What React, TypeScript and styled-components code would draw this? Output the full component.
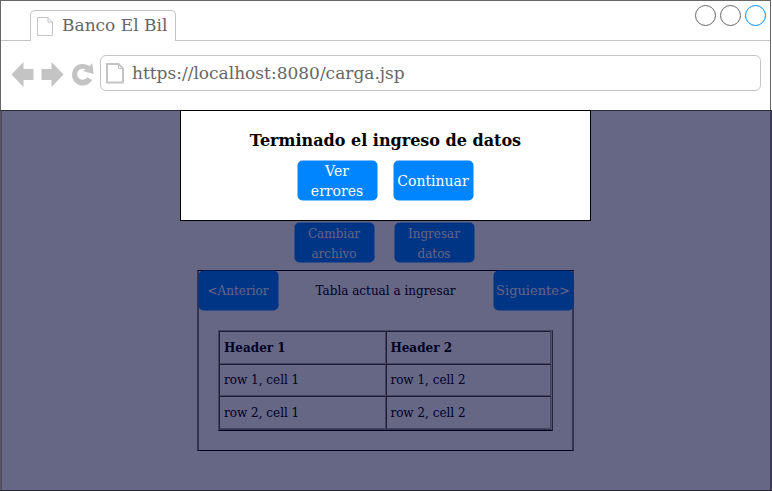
import React from "react";
import styled, { createGlobalStyle } from "styled-components";

const Global = createGlobalStyle`
  * { box-sizing: border-box; }
  html, body { margin: 0; overflow: hidden; }
  body { width: 772px; height: 491px; background: #fff; font-family: "DejaVu Serif", serif; }
`;

const Window = styled.div`
  display: flex;
  flex-direction: column;
  width: 772px;
  height: 491px;
`;

const Chrome = styled.header`
  width: 771px;
  height: 110px;
  border: 1px solid #666;
  border-bottom: 0;
`;

const TabBar = styled.div`
  display: flex;
  justify-content: space-between;
  align-items: flex-start;
  height: 40px;
  padding: 4px 3px 0 29px;
  border-bottom: 1px solid #c4c4c4;
`;

const Tab = styled.div`
  display: flex;
  width: 146px;
  height: 31px;
  margin-top: 5px;
  padding: 6px 0 0 6px;
  border: 1px solid #c4c4c4;
  border-bottom: 0;
  border-radius: 5px 5px 0 0;
  background: #fff;
  color: #666;
  font-size: 17px;
  line-height: 16px;
  white-space: nowrap;
`;

const TabTitle = styled.span`
  margin-left: 8px;
`;

const Controls = styled.div`
  display: flex;
  gap: 3px;
`;

const AddressBar = styled.div`
  display: flex;
  height: 69px;
  padding: 14px 0 0 10px;
`;

const NavIcons = styled.svg`
  flex: none;
  margin-top: 6px;
`;

const Address = styled.div`
  display: flex;
  align-items: center;
  width: 661px;
  height: 36px;
  padding-left: 5px;
  border: 1px solid #c4c4c4;
  border-radius: 6px;
  color: #666;
  font-size: 17px;
`;

const Url = styled.span`
  margin-left: 7px;
`;

const Viewport = styled.main`
  position: relative;
  width: 772px;
  height: 381px;
  padding-top: 111px;
  border: 1px solid #24242e;
  border-top-color: #2c2c36;
  border-left-color: #555561;
  border-right-color: #3d3d50;
  background: #666685;
  box-shadow: inset 1px 0 #4b4b61, inset -1px 0 #3d3d55;
  color: #00001f;
`;

const Actions = styled.div<{ $gap: number }>`
  display: flex;
  gap: ${(p) => p.$gap}px;
`;

const PageActions = styled(Actions)`
  margin-left: 293px;
`;

const Button = styled.button<{ $dim?: boolean; $size?: number }>`
  position: relative;
  isolation: isolate;
  flex: none;
  width: 80px;
  height: 40px;
  padding: ${(p) => (p.$dim ? "2px 0 0" : "1px 0 0")};
  border: 0;
  background: none;
  color: ${(p) => (p.$dim ? "#666685" : "#fff")};
  font: ${(p) => p.$size ?? 14}px/20px "DejaVu Serif", serif;

  &::before {
    content: "";
    position: absolute;
    inset: 0;
    z-index: -1;
    border-radius: 5px;
    background: ${(p) => (p.$dim ? "#003585" : "#0085ff")};
    transform: translate(0.5px, 0.5px);
  }
`;

const Panel = styled.section`
  width: 377px;
  height: 181px;
  margin: 8px 0 0 196px;
  border: solid #333352;
  border-width: 1px 2px;
  border-top-color: #00001f;
  border-bottom-color: #00001f;
`;

const PanelHead = styled.div`
  display: flex;
  justify-content: space-between;
  margin: -1px -1px 0;
  font-size: 12px;
  line-height: 42px;
`;

const Table = styled.div`
  display: grid;
  grid-template-columns: 167px 165px;
  grid-template-rows: 33px 32px 33px;
  width: 335px;
  height: 101px;
  margin: 18px 0 0 19px;
  border: 1px solid #44445f;
  border-right-color: #24243f;
  border-bottom-color: #00001f;
  box-shadow: inset -1px 0 #50506c, inset 0 -1px #333352;
  font-size: 12px;
`;

const Cell = styled.div<{ $head?: boolean }>`
  display: flex;
  align-items: center;
  padding-left: 4px;
  border: 1px solid #44445f;
  border-left-color: #1c1c3a;
  border-top-color: #1c1c3a;
  font-weight: ${(p) => (p.$head ? 700 : 400)};

  &:nth-child(even) {
    padding-left: 3.4px;
  }
`;

const Dialog = styled.div`
  position: absolute;
  top: -1px;
  left: 179px;
  width: 411px;
  height: 111px;
  padding-top: 19px;
  border: 1px solid #000;
  background: #fff;
  color: #000;
`;

const DialogTitle = styled.h1`
  margin: 0 0 8px;
  font-size: 16px;
  line-height: 22px;
  text-align: center;
`;

const DialogActions = styled(Actions)`
  margin-left: 116px;
`;

const Circle = ({ color }: { color: string }) => (
  <svg width="22" height="22" fill="none" stroke={color}>
    <circle cx="10.5" cy="10.5" r="10" />
  </svg>
);

const rows = [
  ["Header 1", "Header 2"],
  ["row 1, cell 1", "row 1, cell 2"],
  ["row 2, cell 1", "row 2, cell 2"],
];

export default function App() {
  return (
    <>
      <Global />
      <Window>
        <Chrome>
          <TabBar>
            <Tab>
              <svg width="17" height="19" fill="none" stroke="#c4c4c4">
                <path d="M.5.5H11L15.5 5V18.5H.5ZM11 .5V5H15.5" />
              </svg>
              <TabTitle>Banco El Bil</TabTitle>
            </Tab>
            <Controls>
              <Circle color="#666" />
              <Circle color="#666" />
              <Circle color="#008cff" />
            </Controls>
          </TabBar>
          <AddressBar>
            <NavIcons width="89" height="27" viewBox="11 61 89 27" fill="#c4c4c4">
              <path d="M11.5 74.5L23.5 62V69H33.5V80H23.5V87ZM63.5 74.5L51.5 62V69H41.5V80H51.5V87Z" />
              <path d="M89.3 66.1L92.3 63.3L93.6 74L82.8 71L85.8 69.6A5.5 5.5 0 1 0 87.3 77.2L92.2 80A10.8 10.8 0 1 1 89.3 66.1Z" />
            </NavIcons>
            <Address>
              <svg width="19" height="21" fill="none" stroke="#c4c4c4">
                <path d="M1 1H12.5L17 5.5V19.5H1Z" strokeWidth="2" />
                <path d="M12.5 1V5.5H17" />
              </svg>
              <Url>https://localhost:8080/carga.jsp</Url>
            </Address>
          </AddressBar>
        </Chrome>
        <Viewport>
          <PageActions $gap={20}>
            <Button $dim $size={12}>Cambiar archivo</Button>
            <Button $dim $size={12}>Ingresar datos</Button>
          </PageActions>
          <Panel>
            <PanelHead>
              <Button $dim $size={12}>&lt;Anterior</Button>
              <span>Tabla actual a ingresar</span>
              <Button $dim $size={13}>Siguiente&gt;</Button>
            </PanelHead>
            <Table>
              {rows.flatMap((row, r) =>
                row.map((text) => (
                  <Cell key={text} $head={r === 0}>{text}</Cell>
                ))
              )}
            </Table>
          </Panel>
          <Dialog>
            <DialogTitle>Terminado el ingreso de datos</DialogTitle>
            <DialogActions $gap={16}>
              <Button>Ver errores</Button>
              <Button>Continuar</Button>
            </DialogActions>
          </Dialog>
        </Viewport>
      </Window>
    </>
  );
}
